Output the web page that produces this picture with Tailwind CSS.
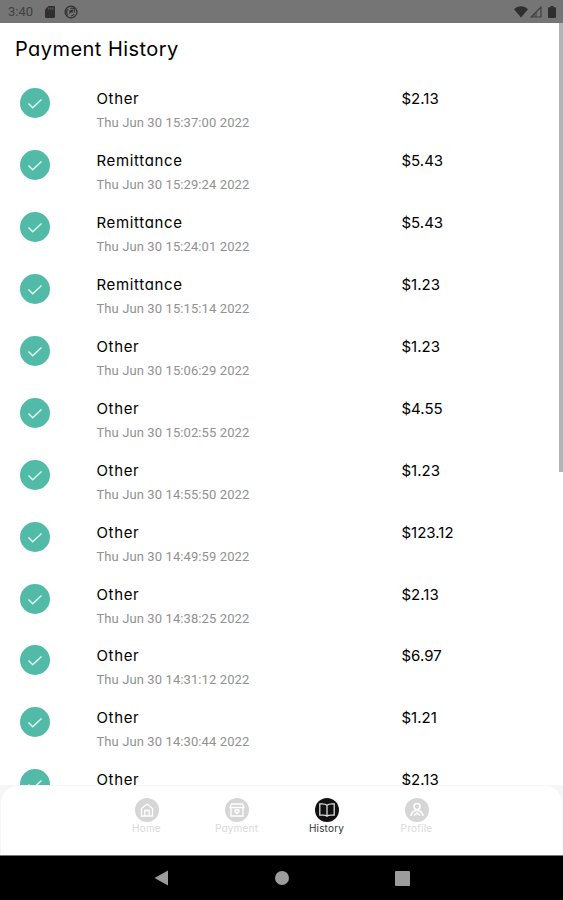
<!DOCTYPE html>
<html lang="en">
	<head>
		<meta charset="UTF-8" />
		<meta name="viewport" content="width=device-width, initial-scale=1.0" />
		<title>Payment History</title>
		<script src="https://cdn.jsdelivr.net/npm/@tailwindcss/browser@4"></script>
	</head>
	<body class="bg-white font-['Inter',sans-serif] [font-feature-settings:'cv11']">
		<div class="relative flex h-[900px] w-[563px] flex-col overflow-hidden">
			<!-- status bar -->
			<header class="flex h-[23px] shrink-0 items-center bg-[#757575] pl-2 pr-[7px] text-[#2f2f2f]">
				<span class="w-[37px] font-[Roboto,sans-serif] text-[13px] leading-none text-[#404040]">3:40</span>
				<svg viewBox="0 0 10 12" fill="currentColor" class="h-3 w-[10px]">
					<path d="M3.5 0H9a1 1 0 0 1 1 1v10a1 1 0 0 1-1 1H1a1 1 0 0 1-1-1V3.5z" />
					<path d="M3.8 1.5v2M5.8 1.5v2M7.8 1.5v2" stroke="#757575" stroke-width=".8" />
				</svg>
				<svg viewBox="0 0 14 14" fill="none" stroke="currentColor" class="ml-[9px] h-[14px] w-[14px]">
					<circle cx="7" cy="7" r="5.9" stroke-width="1.2" />
					<path d="M4 10.5A4.3 4.3 0 0 1 4.2 4M6 3.2h4.3v4.3M10 9a4 4 0 0 1-3 2" stroke-width="1.1" />
					<path d="M5.5 5.5 9 4.5 8.5 8 7 7.2 5 9.2z" fill="currentColor" stroke="none" />
				</svg>
				<svg viewBox="0 0 14 12" fill="currentColor" class="ml-auto h-3 w-[14px]">
					<path d="M0 3.2C4-.7 10-.7 14 3.2L7 11.5z" />
				</svg>
				<svg viewBox="0 0 12 12" class="ml-[2px] h-3 w-3">
					<path d="M11 1v10H1z" fill="none" stroke="#404040" stroke-width="1.2" />
					<path d="M7 5v6H1z" fill="#404040" fill-opacity=".5" />
				</svg>
				<svg viewBox="0 0 8 12" fill="currentColor" class="ml-[6px] h-3 w-2">
					<path d="M2.5 0h3v1.2H7a1 1 0 0 1 1 1V11a1 1 0 0 1-1 1H1a1 1 0 0 1-1-1V2.2a1 1 0 0 1 1-1h1.5z" />
				</svg>
			</header>

			<main class="flex min-h-0 flex-1 flex-col overflow-hidden">
				<h1 class="flex h-[55px] shrink-0 items-center pl-[15px] pb-[3px] text-[20px] tracking-[0.45px] text-black">Payment History</h1>
				<ul id="list"></ul>
			</main>

			<!-- scroll thumb -->
			<div class="absolute right-0 top-[23px] h-[449px] w-1 bg-[#b4b4b4]"></div>

			<div class="shrink-0 bg-[#f6f6f6]">
				<nav class="flex h-[70px] justify-center rounded-t-[18px] border-x border-t border-[#f6f6f6] bg-white pt-[12px] text-[10px] leading-[13px] tracking-[0.2px] text-[#d9d9d9]">
					<a class="flex w-[90px] flex-col items-center">
						<svg viewBox="0 0 24 24" fill="none" stroke="#fff" stroke-width="1.3" class="h-6 w-6">
							<circle cx="12" cy="12" r="12" fill="#d6d6d6" stroke="none" />
							<path d="M6.5 10.5 12 6l5.5 4.5V18h-11zM9.8 18v-5.500h4.400V18" />
						</svg>
						<span>Home</span>
					</a>
					<a class="flex w-[90px] flex-col items-center">
						<svg viewBox="0 0 24 24" fill="none" stroke="#fff" stroke-width="1.3" class="h-6 w-6">
							<circle cx="12" cy="12" r="12" fill="#d6d6d6" stroke="none" />
							<path d="M6 9.500h12V18H6zM5 9.500l1.500-3.500h11L19 9.500z" />
							<path d="m12 15.500-2-2c-.8-1.500 1-2.500 2-1.200 1-1.300 2.800-.3 2 1.200z" />
						</svg>
						<span>Payment</span>
					</a>
					<a class="flex w-[90px] flex-col items-center text-[#333]">
						<svg viewBox="0 0 24 24" fill="none" stroke="#ddd" stroke-width="1.3" class="h-6 w-6">
							<circle cx="12" cy="12" r="12" fill="#111" stroke="none" />
							<path d="M12 7.200C10.800 6.200 9 5.800 7 5.800H4.800v11.400H8c1.700 0 3 .2 4 1 1-.8 2.300-1 4-1h3.200V5.800H17c-2 0-3.800.4-5 1.400zv11" />
						</svg>
						<span>History</span>
					</a>
					<a class="flex w-[90px] flex-col items-center">
						<svg viewBox="0 0 24 24" fill="none" stroke="#fff" stroke-width="1.5" class="h-6 w-6">
							<circle cx="12" cy="12" r="12" fill="#d6d6d6" stroke="none" />
							<circle cx="12" cy="8.5" r="3" />
							<path d="M6 18c.5-3.500 2.500-5.500 6-5.500s5.500 2 6 5.500M9 17.500l3-2.500 3 2.500" />
						</svg>
						<span>Profile</span>
					</a>
				</nav>
			</div>

			<!-- system buttons -->
			<footer class="flex h-[45px] shrink-0 items-center justify-center gap-[106px] border-t border-[#777] bg-black">
				<svg viewBox="0 0 15 16" fill="#9c9c9c" class="h-4 w-[15px]"><path d="M14 .5v15L.5 8z" /></svg>
				<span class="h-[14px] w-[14px] rounded-full bg-[#9c9c9c]"></span>
				<span class="h-[15px] w-[15px] rounded-[1px] bg-[#9c9c9c]"></span>
			</footer>
		</div>

		<script>
			const payments = [
				["Other", "15:37:00", "$2.13"],
				["Remittance", "15:29:24", "$5.43"],
				["Remittance", "15:24:01", "$5.43"],
				["Remittance", "15:15:14", "$1.23"],
				["Other", "15:06:29", "$1.23"],
				["Other", "15:02:55", "$4.55"],
				["Other", "14:55:50", "$1.23"],
				["Other", "14:49:59", "$123.12"],
				["Other", "14:38:25", "$2.13"],
				["Other", "14:31:12", "$6.97"],
				["Other", "14:30:44", "$1.21"],
				["Other", "14:29:10", "$2.13"],
			];
			document.getElementById("list").innerHTML = payments
				.map(
					([name, time, amount]) => `
					<li class="flex h-[61.9px] pl-5 pt-[10.4px]">
						<svg viewBox="0 0 30 30" class="h-[30px] w-[30px] shrink-0">
							<circle cx="15" cy="15" r="15" fill="#52bba7" />
							<path d="m8.500 15.500 4.200 4.200 8.800-8.200" fill="none" stroke="#dff7f1" stroke-width="1.5" />
						</svg>
						<div class="ml-[46.500px] w-[305px]">
							<p class="text-[15px] leading-[22px] tracking-[0.65px] text-black">${name}</p>
							<p class="mt-[3px] font-[Roboto,sans-serif] text-[13px] leading-5 tracking-[0.1px] text-[#919191]">Thu Jun 30 ${time} 2022</p>
						</div>
						<span class="text-[15px] leading-[22px] text-black">${amount}</span>
					</li>`
				)
				.join("");
		</script>
	</body>
</html>
